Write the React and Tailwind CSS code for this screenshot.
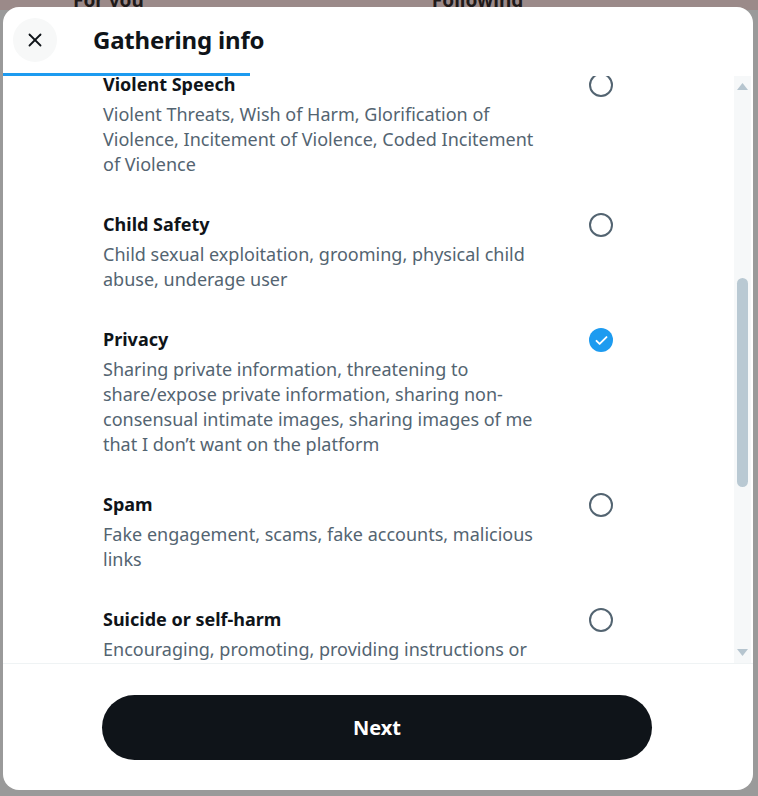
import { X } from 'lucide-react';

const items = [
  {
    title: 'Violent Speech',
    desc: 'Violent Threats, Wish of Harm, Glorification of Violence, Incitement of Violence, Coded Incitement of Violence',
  },
  { title: 'Child Safety', desc: 'Child sexual exploitation, grooming, physical child abuse, underage user' },
  {
    title: 'Privacy',
    desc: 'Sharing private information, threatening to share/expose private information, sharing non-consensual intimate images, sharing images of me that I don\u2019t want on the platform',
    checked: true,
  },
  { title: 'Spam', desc: 'Fake engagement, scams, fake accounts, malicious links' },
  { title: 'Suicide or self-harm', desc: 'Encouraging, promoting, providing instructions or sharing strategies for self-harm.' },
];

function Radio({ checked }) {
  if (checked) {
    return (
      <div className="w-6 h-6 rounded-full bg-[#1d9bf0] flex items-center justify-center">
        <svg width="15" height="15" viewBox="0 0 24 24" fill="none" stroke="white" strokeWidth="3" strokeLinecap="round" strokeLinejoin="round">
          <path d="M4 12.5l5 5L20 6.5" />
        </svg>
      </div>
    );
  }
  return <div className="w-6 h-6 rounded-full border-2 border-[#536471]" />;
}

// Fake scrollbar drawn at right edge of list
function Scrollbar() {
  return (
    <div className="w-[17px] bg-[#f6f8f9] flex flex-col items-center justify-between py-[7px] mr-[2px]">
      <svg width="11" height="7" viewBox="0 0 11 7"><path d="M5.5 0L11 7H0z" fill="#b6c5cf" /></svg>
      <div className="flex-1 w-full flex flex-col">
        <div className="h-[188px]" />
        <div className="mx-auto w-[11px] h-[209px] rounded-full bg-[#b9c9d3]" />
      </div>
      <svg width="11" height="7" viewBox="0 0 11 7"><path d="M0 0h11L5.5 7z" fill="#b6c5cf" /></svg>
    </div>
  );
}

export default function App() {
  return (
    <div
      className="w-[758px] h-[796px] bg-[#9a9a9a] overflow-hidden relative"
      style={{ fontFamily: '"Noto Sans", Arial, sans-serif' }}
    >
      {/* page behind the dialog */}
      <div className="absolute top-[-14px] left-0 right-0 h-[24px] bg-[#9b8a89] flex text-[19px] font-bold text-[#1f1a1a]">
        <span className="ml-[73px]">For you</span>
        <span className="ml-[288px]">Following</span>
      </div>

      <div className="relative mt-[7px] ml-[3px] w-[750px] h-[783px] bg-white rounded-[16px] flex flex-col overflow-hidden">
        {/* header */}
        <div className="h-[66px] flex items-center shrink-0">
          <div className="ml-[10px] w-[44px] h-[44px] rounded-full bg-[#f7f8f8] flex items-center justify-center text-[#0f1419]">
            <X size={22} strokeWidth={2} />
          </div>
          <div className="ml-[36px] text-[24px] font-bold text-[#0f1419] tracking-[-0.2px]">Gathering info</div>
        </div>
        <div className="h-[3px] w-[247px] bg-[#1d9bf0] shrink-0" />

        {/* list */}
        <div className="flex-1 flex min-h-0">
          <div className="flex-1 overflow-hidden">
            <div className="mt-[-22px]">
              {items.map((it) => (
                <div key={it.title} className="flex items-start pl-[100px] pr-[121px] pt-[18px] pb-[17px]">
                  <div className="flex-1 pr-[43px]">
                    <div className="text-[18px] leading-[25px] font-bold text-[#0f1419]">{it.title}</div>
                    <div className="mt-[5px] text-[18px] leading-[25px] text-[#536471]">{it.desc}</div>
                  </div>
                  <div className="mt-[1px]">
                    <Radio checked={it.checked} />
                  </div>
                </div>
              ))}
            </div>
          </div>
          <Scrollbar />
        </div>

        {/* footer */}
        <div className="h-[127px] shrink-0 border-t border-[#eff3f4] flex items-start justify-center pt-[31px] pr-[2px]">
          <button className="w-[550px] h-[65px] rounded-full bg-[#0f1419] text-white text-[20px] font-bold">Next</button>
        </div>
      </div>
    </div>
  );
}
